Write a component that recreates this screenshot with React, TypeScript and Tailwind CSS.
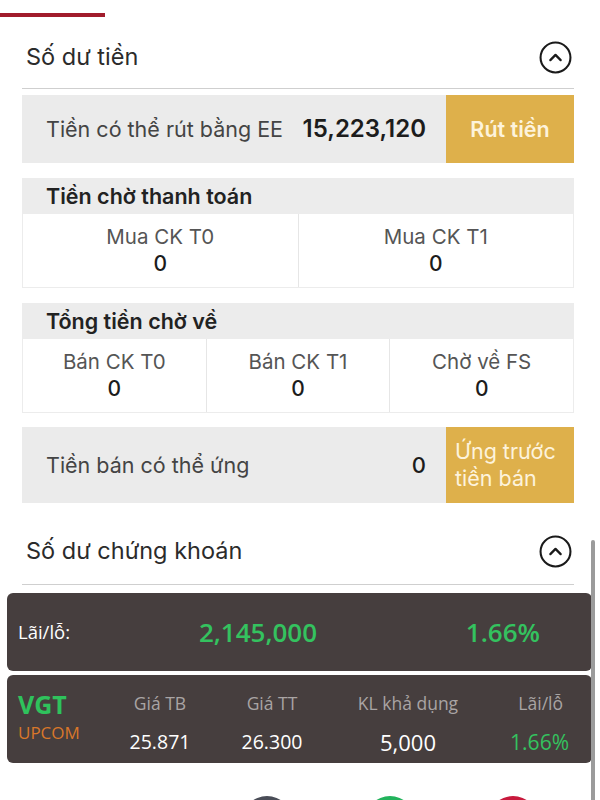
import React from 'react';

const top = '"Inter", "Roboto", "Liberation Sans", sans-serif';
const card = '"Open Sans", "Noto Sans", sans-serif';

const Chevron: React.FC = () => (
  <svg width="33" height="33" viewBox="0 0 32 32" fill="none">
    <circle cx="16" cy="16" r="14.5" stroke="#1a1a1a" strokeWidth="2" />
    <polyline points="11,18.5 16,13.5 21,18.5" stroke="#1a1a1a" strokeWidth="2.2" strokeLinecap="round" strokeLinejoin="round" />
  </svg>
);

const Cell: React.FC<{ label: string; value: string; last?: boolean }> = ({ label, value, last }) => (
  <div
    className={
      'flex-1 flex flex-col items-center justify-center ' + (last ? '' : 'border-r border-[#e6e6e6]')
    }
  >
    <div className="text-[20.5px] leading-[26px] text-[#555]">{label}</div>
    <div className="text-[21px] leading-[27px] text-[#1c1c1c] font-medium">{value}</div>
  </div>
);

const Group: React.FC<{ title: string; cells: { label: string; value: string }[] }> = ({ title, cells }) => (
  <div>
    <div className="h-[36px] bg-[#ececec] flex items-center pl-[24px] text-[21.5px] font-semibold text-[#222]">
      {title}
    </div>
    <div className="h-[74px] flex border border-t-0 border-[#ececec]">
      {cells.map((c, i) => (
        <Cell key={c.label} label={c.label} value={c.value} last={i === cells.length - 1} />
      ))}
    </div>
  </div>
);

const App: React.FC = () => {
  return (
    <div className="w-[600px] h-[800px] bg-white relative overflow-hidden">
      <div className="w-[105px] h-[4px] bg-[#a11c2c] mt-[13px]" />

      <div className="pl-[22px] pr-[26px]" style={{ fontFamily: top }}>
        <div className="mt-[20px] h-[40px] flex items-center justify-between pl-[4px]">
          <span className="text-[23.5px] text-[#2b2b2b]">Số dư tiền</span>
          <span className="mr-[2px]">
            <Chevron />
          </span>
        </div>
        <div className="mt-[11px] border-b border-[#cfcfcf]" />

        <div className="mt-[6px] h-[68px] bg-[#ebebeb] flex items-center">
          <span className="pl-[24px] text-[21.5px] text-[#444]">Tiền có thể rút bằng EE</span>
          <span className="ml-auto pr-[20px] text-[24px] font-semibold text-[#1c1c1c]">15,223,120</span>
          <div className="w-[128px] h-full bg-[#deb04b] flex items-center justify-center text-[21.5px] font-semibold text-[#fdf3dc]">
            Rút tiền
          </div>
        </div>

        <div className="mt-[15px]">
          <Group
            title="Tiền chờ thanh toán"
            cells={[
              { label: 'Mua CK T0', value: '0' },
              { label: 'Mua CK T1', value: '0' },
            ]}
          />
        </div>

        <div className="mt-[15px]">
          <Group
            title="Tổng tiền chờ về"
            cells={[
              { label: 'Bán CK T0', value: '0' },
              { label: 'Bán CK T1', value: '0' },
              { label: 'Chờ về FS', value: '0' },
            ]}
          />
        </div>

        <div className="mt-[14px] h-[76px] bg-[#ebebeb] flex items-center">
          <span className="pl-[24px] text-[21.5px] text-[#444]">Tiền bán có thể ứng</span>
          <span className="ml-auto pr-[20px] text-[22px] font-medium text-[#1c1c1c]">0</span>
          <div className="w-[128px] h-full bg-[#deb04b] flex flex-col justify-center pl-[9px] text-[21.5px] leading-[27px] text-[#fdf3dc]">
            <span>Ứng trước</span>
            <span>tiền bán</span>
          </div>
        </div>

        <div className="mt-[28px] h-[40px] flex items-center justify-between pl-[4px]">
          <span className="text-[23.5px] text-[#2b2b2b]">Số dư chứng khoán</span>
          <span className="mr-[2px]">
            <Chevron />
          </span>
        </div>
        <div className="mt-[13px] border-b border-[#cfcfcf]" />
      </div>

      <div className="pl-[7px] pr-[8px]" style={{ fontFamily: card }}>
        <div className="mt-[8px] h-[78px] bg-[#463e3e] rounded-[6px] flex items-center pl-[11px] pr-[52px]">
          <span className="w-[160px] text-[18.5px] text-white">Lãi/lỗ:</span>
          <span className="w-[160px] text-center text-[26px] font-semibold text-[#34c25f]">2,145,000</span>
          <span className="ml-auto text-[26px] font-semibold text-[#34c25f]">1.66%</span>
        </div>

        <div className="mt-[4px] h-[88px] bg-[#463e3e] rounded-[6px] flex items-start pt-[16px] pl-[11px]">
          <div className="w-[97px] flex flex-col -mt-[3px]">
            <span className="text-[25px] leading-[32px] font-bold text-[#2fc25c]">VGT</span>
            <span className="mt-[2px] text-[17px] leading-[22px] text-[#d9772a]">UPCOM</span>
          </div>
          <div className="w-[90px] flex flex-col items-center">
            <span className="text-[17.5px] leading-[24px] text-[#a9a4a4]">Giá TB</span>
            <span className="mt-[14px] text-[19.5px] leading-[26px] text-white">25.871</span>
          </div>
          <div className="w-[134px] flex flex-col items-center">
            <span className="text-[17.5px] leading-[24px] text-[#a9a4a4]">Giá TT</span>
            <span className="mt-[14px] text-[19.5px] leading-[26px] text-white">26.300</span>
          </div>
          <div className="w-[138px] flex flex-col items-center">
            <span className="text-[17.5px] leading-[24px] text-[#a9a4a4]">KL khả dụng</span>
            <span className="mt-[14px] text-[22px] leading-[26px] font-medium text-white">5,000</span>
          </div>
          <div className="w-[92px] flex flex-col items-end">
            <span className="text-[17.5px] leading-[24px] text-[#a9a4a4] pr-[6px]">Lãi/lỗ</span>
            <span className="mt-[14px] text-[21px] leading-[26px] text-[#34c25f]">1.66%</span>
          </div>
        </div>
      </div>

      <div className="mt-[33px] flex justify-center gap-[73px] pl-[180px]">
        <div className="w-[50px] h-[50px] rounded-full bg-[#4a4d57]" />
        <div className="w-[50px] h-[50px] rounded-full bg-[#22b35c]" />
        <div className="w-[50px] h-[50px] rounded-full bg-[#c8193c]" />
      </div>

      <div className="absolute right-[5px] top-[540px] w-[4px] h-[270px] rounded-full bg-[#9b9b9b]" />
    </div>
  );
};

export default App;
